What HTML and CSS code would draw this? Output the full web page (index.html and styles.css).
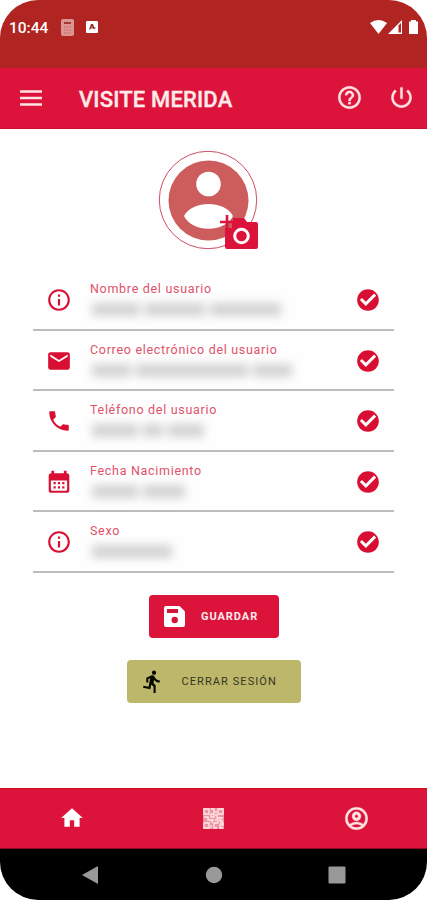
FILE: index.html
```html
<!DOCTYPE html>
<html lang="es">
<head>
<meta charset="utf-8">
<title>Visite Merida</title>
<link rel="stylesheet" href="styles.css">
</head>
<body>
<div class="phone">
  <div class="status">
    <span class="time">10:44</span>
    <svg class="calc" viewBox="0 0 13 17"><rect width="13" height="17" rx="2" fill="#dc9692"/><path d="M3 4h7" stroke="#a63735" stroke-width="2"/><path d="M3 8h7M3 11h7M3 14h7" stroke="#c66b68" stroke-width="1.2" stroke-dasharray="1.6 1"/></svg>
    <svg class="app" viewBox="0 0 12 12"><rect width="12" height="12" rx="1" fill="#fff"/><path d="M3 9 5 3h2l1 3 2 1-2 1-2-1z" fill="#8b2727"/><path d="M5.5 5.5h1v1h-1z" fill="#fff"/></svg>
    <svg class="signals" viewBox="0 0 50 16"><path d="M0 4Q8.500-2 17 4L8.500 15z" fill="#fff"/><path d="M18 15 32 1v14z" fill="#fff"/><path d="M28.500 6.500 31 4v9.500h-2.500z" fill="#b02422"/><path d="M39 2.500h2V1h5v1.500h2V15h-9z" fill="#fff"/></svg>
  </div>
  <header class="bar">
    <svg class="menu" viewBox="0 0 22 16"><path d="M0 1.500h22M0 8h22M0 14.500h22" stroke="#ffe3e3" stroke-width="2.600"/></svg>
    <h1>VISITE MERIDA</h1>
    <svg class="tool help" viewBox="0 0 24 24"><path d="M11 18h2v-2h-2v2zm1-16C6.480 2 2 6.480 2 12s4.480 10 10 10 10-4.480 10-10S17.520 2 12 2zm0 18c-4.410 0-8-3.590-8-8s3.590-8 8-8 8 3.590 8 8-3.590 8-8 8zm0-14c-2.210 0-4 1.790-4 4h2c0-1.100.9-2 2-2s2 .9 2 2c0 2-3 1.750-3 5h2c0-2.250 3-2.500 3-5 0-2.210-1.790-4-4-4z"/></svg>
    <svg class="tool" viewBox="0 0 24 24"><path d="M13 3h-2v10h2V3zm4.830 2.170-1.420 1.420C17.990 7.860 19 9.810 19 12c0 3.870-3.130 7-7 7s-7-3.130-7-7c0-2.190 1.010-4.140 2.580-5.420L6.170 5.170C4.230 6.820 3 9.260 3 12c0 4.970 4.030 9 9 9s9-4.030 9-9c0-2.740-1.230-5.180-3.170-6.830z"/></svg>
  </header>
  <main>
    <div class="avatar">
      <svg viewBox="0 0 100 100"><circle cx="50" cy="50" r="48.700" fill="#fff" stroke="#cf4d61" stroke-width="1"/><circle cx="50.500" cy="50.500" r="40" fill="#cd5c5c"/><circle cx="50.500" cy="34" r="12.300" fill="#fff"/><path d="M26 66C34 50 67 50 75 66C67 83 34 83 26 66Z" fill="#fff"/></svg>
      <svg class="camera" viewBox="0 0 38 35"><path d="M13 3h11l3 4h9a2 2 0 0 1 2 2v23a2 2 0 0 1-2 2H7a2 2 0 0 1-2-2V13h7V8h1z" fill="#dc143c"/><path d="M0 7h13M7 0v13" stroke="#dc143c" stroke-width="2.600"/><circle cx="21.500" cy="21" r="6.800" fill="none" stroke="#fff" stroke-width="3"/></svg>
    </div>
    <div class="fields">
      <div class="field">
        <svg class="icon" viewBox="0 0 24 24"><use href="#info"/></svg>
        <div class="text"><span class="label">Nombre del usuario</span><span class="hidden"><i class="w50"></i><i class="w60"></i><i class="w70"></i></span></div>
        <svg class="icon" viewBox="0 0 24 24"><use href="#check"/></svg>
      </div>
      <div class="field">
        <svg class="icon" viewBox="0 0 24 24"><path d="M20 4H4c-1.100 0-2 .9-2 2v12c0 1.100.9 2 2 2h16c1.100 0 2-.9 2-2V6c0-1.100-.9-2-2-2zm0 4-8 5-8-5V6l8 5 8-5v2z"/></svg>
        <div class="text"><span class="label">Correo electrónico del usuario</span><span class="hidden"><i class="w38"></i><i class="w110"></i><i class="w38"></i></span></div>
        <svg class="icon" viewBox="0 0 24 24"><use href="#check"/></svg>
      </div>
      <div class="field">
        <svg class="icon" viewBox="0 0 24 24"><path d="M6.620 10.790c1.440 2.830 3.760 5.140 6.590 6.590l2.200-2.200c.27-.27.67-.36 1.020-.24 1.120.37 2.330.57 3.570.57.55 0 1 .45 1 1V20c0 .55-.45 1-1 1-9.390 0-17-7.610-17-17 0-.55.45-1 1-1h3.500c.55 0 1 .45 1 1 0 1.250.2 2.450.57 3.570.11.35.03.74-.25 1.020l-2.200 2.200z"/></svg>
        <div class="text"><span class="label">Teléfono del usuario</span><span class="hidden"><i class="w46"></i><i class="w24"></i><i class="w30"></i></span></div>
        <svg class="icon" viewBox="0 0 24 24"><use href="#check"/></svg>
      </div>
      <div class="field">
        <svg class="icon" viewBox="0 0 24 24"><path fill-rule="evenodd" d="M5 1.500h2.500V4h9V1.500H19V4a2.500 2.500 0 0 1 2.500 2.500v13A2.500 2.500 0 0 1 19 22H5a2.500 2.500 0 0 1-2.500-2.500v-13A2.500 2.500 0 0 1 5 4zM4.500 10.500V19a1 1 0 0 0 1 1h13a1 1 0 0 0 1-1v-8.500z"/><path d="M7 12h2v2H7zm4 0h2v2h-2zm4 0h2v2h-2zm-8 4h2v2H7zm4 0h2v2h-2zm4 0h2v2h-2z"/></svg>
        <div class="text"><span class="label">Fecha Nacimiento</span><span class="hidden"><i class="w46"></i><i class="w36"></i></span></div>
        <svg class="icon" viewBox="0 0 24 24"><use href="#check"/></svg>
      </div>
      <div class="field">
        <svg class="icon" viewBox="0 0 24 24"><use href="#info"/></svg>
        <div class="text"><span class="label">Sexo</span><span class="hidden"><i class="w80"></i></span></div>
        <svg class="icon" viewBox="0 0 24 24"><use href="#check"/></svg>
      </div>
    </div>
    <button class="btn save"><svg viewBox="0 0 21 21"><path d="M2 0h13.500L21 5.500V19a2 2 0 0 1-2 2H2a2 2 0 0 1-2-2V2a2 2 0 0 1 2-2z" fill="#fff"/><path d="M3 3h11v4H3z" fill="#d4163a"/><circle cx="10.700" cy="14" r="3.200" fill="#d4163a"/></svg><span>GUARDAR</span></button>
    <button class="btn logout"><svg viewBox="0 0 24 24"><path d="M13.490 5.480c1.100 0 2-.9 2-2s-.9-2-2-2-2 .9-2 2 .9 2 2 2zm-3.600 13.900 1-4.400 2.100 2v6h2v-7.500l-2.100-2 .6-3c1.300 1.500 3.300 2.500 5.500 2.500v-2c-1.900 0-3.500-1-4.300-2.400l-1-1.600c-.4-.6-1-1-1.700-1-.3 0-.5.1-.8.1l-5.200 2.200v4.700h2v-3.400l1.800-.7-1.600 8.100-4.900-1-.4 2 7 1.400z"/></svg><span>CERRAR SESIÓN</span></button>
  </main>
  <nav class="tabs">
    <svg class="home" viewBox="0 0 24 24"><path d="M10 20v-6h4v6h5v-8h3L12 3 2 12h3v8z"/></svg>
    <svg class="qr" viewBox="0 0 21 21"><rect width="21" height="21" fill="#ee95a2"/><path fill="none" stroke="#ffe9e9" stroke-width="1.300" d="M1 1h5v5H1zM15 1h5v5h-5zM1 15h5v5H1zM8 1h3v3h3M8 6h3v3H8zM1 9h4v3h4v3M12 7h2v3h6M17 9v4h3M12 12h3v3h-4v5h3M17 15h3v2h-3v3h3M8 12h3M8 17v3"/></svg>
    <svg class="user" viewBox="0 0 24 24"><path fill-rule="evenodd" d="M12 2a10 10 0 1 0 0 20 10 10 0 0 0 0-20zM7.350 18.500C8.660 17.560 10.260 17 12 17s3.340.56 4.650 1.500C15.340 19.440 13.740 20 12 20s-3.340-.56-4.650-1.500zm10.790-1.380C16.450 15.800 14.320 15 12 15s-4.450.8-6.140 2.120A8 8 0 1 1 18.140 17.120zM12 6a4 4 0 1 0 0 8 4 4 0 0 0 0-8zm0 2.500a1.500 1.500 0 1 1 0 3 1.500 1.500 0 0 1 0-3z"/></svg>
  </nav>
  <div class="system">
    <svg viewBox="0 0 18 20"><path d="M1 10 17 1v18z"/></svg>
    <svg viewBox="0 0 18 20"><circle cx="9" cy="10" r="8.200"/></svg>
    <svg viewBox="0 0 18 20"><rect x=".5" y="1.500" width="17" height="17" rx="1"/></svg>
  </div>
</div>
<svg class="defs"><defs>
  <path id="info" d="M11 7h2v2h-2zm0 4h2v6h-2zm1-9C6.480 2 2 6.480 2 12s4.480 10 10 10 10-4.480 10-10S17.520 2 12 2zm0 18c-4.410 0-8-3.590-8-8s3.590-8 8-8 8 3.590 8 8-3.590 8-8 8z"/>
  <path id="check" fill-rule="evenodd" d="M12 2C6.480 2 2 6.480 2 12s4.480 10 10 10 10-4.480 10-10S17.520 2 12 2zm-2 15.500-5.500-5.500 1.910-1.910L10 13.670l7.590-7.590L19.500 8l-9.500 9.500z"/>
</defs></svg>
</body>
</html>
```
FILE: styles.css
```css
* { box-sizing: border-box; }
body { margin: 0; background: #fff; font-family: Roboto, sans-serif; overflow: hidden; }
svg { display: block; flex: none; }
.defs { width: 0; height: 0; }
.phone { width: 427px; height: 900px; display: flex; flex-direction: column; border-radius: 38px; overflow: hidden; background: #fefefe; }
.status { height: 68px; flex: none; background: #b02422; display: flex; padding: 19px 7px 0 9px; }
.time { width: 39px; color: #fff; font-size: 15.5px; font-weight: 500; line-height: 18px; white-space: nowrap; }
.calc { width: 13px; height: 17px; margin-left: 13px; }
.app { width: 12px; height: 12px; margin: 2px 0 0 12px; }
.signals { width: 50px; height: 16px; margin-left: auto; }
.bar { height: 60.500px; flex: none; background: #dc143c; border-bottom: 1px solid #c9102c; display: flex; align-items: center; padding: 0 12px 0 20px; }
.menu { width: 22px; height: 16px; }
h1 { margin: 4px auto 0 37px; font-size: 22px; line-height: 26px; font-weight: 500; letter-spacing: .15px; -webkit-text-stroke: .35px #ffeaea; color: #ffeaea; white-space: nowrap; }
.tool { width: 27px; height: 27px; fill: #ffe3e3; stroke: #ffe3e3; stroke-width: .3; }
.help { margin-right: 25px; }
main { flex: 1; display: flex; flex-direction: column; align-items: center; padding-top: 21px; }
.avatar { width: 100px; height: 100px; position: relative; margin-right: 11px; }
.camera { position: absolute; left: 62px; top: 65.500px; width: 38px; height: 35px; }
.fields { width: 361px; margin: 20.500px 0 22px; }
.field { height: 60.500px; border-bottom: 2px solid #bdbdbd; display: flex; padding: 17px 13px 0; }
.icon { width: 26px; height: 26px; fill: #d80f32; }
.text { width: 283.500px; padding-left: 18px; margin-top: -6px; display: flex; flex-direction: column; }
.label { font-size: 12.500px; line-height: 16px; letter-spacing: .7px; color: #e0526a; white-space: nowrap; }
.hidden { display: flex; gap: 5px; padding: 6px 0 0 2px; filter: blur(5px); }
.hidden i { height: 13px; background: #d2d2d2; }
.w24 { width: 20px; } .w30 { width: 36px; } .w36 { width: 42px; } .w38 { width: 39px; }
.w46 { width: 46px; } .w50 { width: 48px; } .w60 { width: 60px; } .w70 { width: 71px; }
.w80 { width: 80px; } .w110 { width: 112px; }
.btn { height: 43px; border: 0; border-radius: 4px; display: flex; align-items: center; font-family: inherit; font-size: 11px; white-space: nowrap; }
.save { width: 130px; margin-left: 1px; background: #dc143c; color: #ffeaea; font-weight: 700; letter-spacing: .95px; padding: 0 0 0 15px; gap: 16px; }
.save svg { width: 21px; height: 21px; }
.logout { width: 174px; margin-top: 22px; background: #bdb76b; color: #37351d; font-weight: 400; letter-spacing: 1.080px; padding: 0 0 0 13px; gap: 17px; }
.logout svg { width: 25px; height: 25px; fill: #080800; }
.tabs { height: 61.500px; flex: none; background: #dc143c; border-top: 1px solid #c9101c; border-bottom: 1px solid #8d0c24; display: flex; justify-content: space-between; align-items: center; padding: 0 57.500px 0 58.500px; }
.home { width: 26px; height: 26px; fill: #fff; }
.qr { width: 21px; height: 21px; }
.user { width: 27px; height: 27px; fill: #ffe3e3; stroke: #ffe3e3; stroke-width: .3; }
.system { height: 51px; flex: none; background: #000; display: flex; justify-content: space-between; align-items: center; padding: 0 81px; }
.system svg { width: 18px; height: 20px; fill: #999; }
```
